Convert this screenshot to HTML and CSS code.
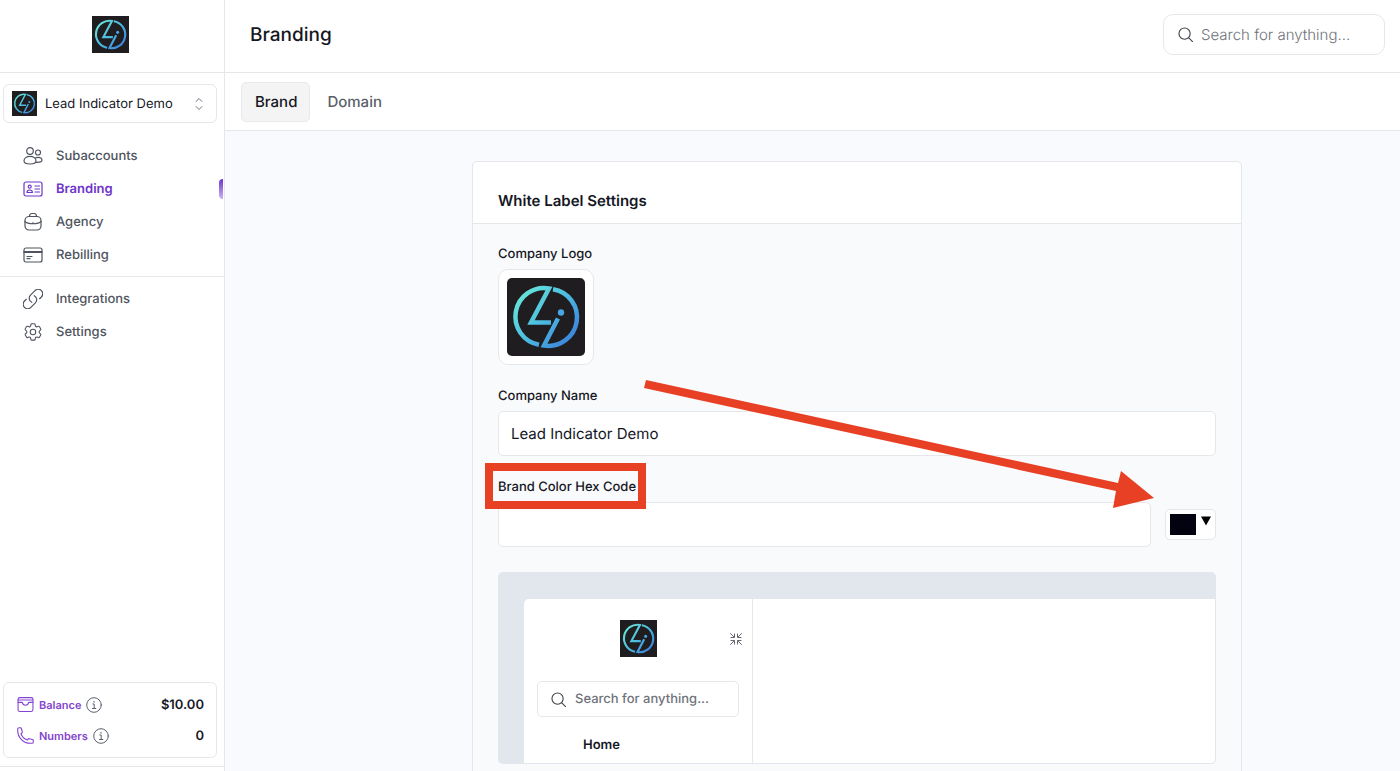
FILE: index.html
```html
<!DOCTYPE html>
<html lang="en">
<head>
<meta charset="utf-8">
<meta name="viewport" content="width=device-width, initial-scale=1">
<title>Branding</title>
<link rel="stylesheet" href="styles.css">
</head>
<body>

<!-- shared shapes -->
<svg class="defs" aria-hidden="true">
  <defs>
    <linearGradient id="logoGradient" gradientUnits="userSpaceOnUse" x1="12" y1="14" x2="66" y2="64">
      <stop offset="0" stop-color="#68e6d8"/>
      <stop offset="0.5" stop-color="#4cbce0"/>
      <stop offset="1" stop-color="#3c80dc"/>
    </linearGradient>
    <symbol id="logo" viewBox="0 0 78 78">
      <rect width="78" height="78" fill="#1f1d20"/>
      <g fill="none" stroke="url(#logoGradient)" stroke-width="4.500">
        <path d="M32 66.800A28.500 28.500 0 0 1 42 10.500L24 44.500H44"/>
        <path d="M46 11.200A28.500 28.500 0 0 1 37 67.500L51 40.500"/>
      </g>
      <circle cx="54" cy="34.500" r="3.200" fill="#48a5e4"/>
    </symbol>
    <symbol id="search" viewBox="0 0 16 16">
      <circle cx="7" cy="7" r="6"/>
      <path d="M11.500 11.500L15.500 15.500"/>
    </symbol>
    <symbol id="info" viewBox="0 0 16 16">
      <circle cx="8" cy="8" r="7.300"/>
      <path d="M6.800 7H8.200V11.500M6.500 11.500H9.800M8 4.300V5.300"/>
    </symbol>
  </defs>
</svg>

<div class="app">

  <aside class="sidebar">
    <div class="sidebar-logo">
      <svg class="logo-md" role="img" aria-label="Lead Indicator"><use href="#logo"/></svg>
    </div>

    <button type="button" class="account">
      <svg class="logo-sm" aria-hidden="true"><use href="#logo"/></svg>
      <span>Lead Indicator Demo</span>
      <svg class="updown" viewBox="0 0 8 14" aria-hidden="true"><path d="M1 4.500L4 1.500L7 4.500M1 9.500L4 12.500L7 9.500"/></svg>
    </button>

    <nav class="nav">
      <ul>
        <li><a href="#">
          <svg viewBox="0 0 20 20"><circle cx="7" cy="5" r="3.300"/><circle cx="15" cy="6.500" r="2.500"/><path d="M7 10.300C3.500 10.300 1 12.200 1 15C1 17.300 3.500 18 7 18S13 17.300 13 15C13 12.200 10.500 10.300 7 10.300ZM12.500 12C13.200 11.600 14.100 11.400 15 11.400C17.300 11.400 19 12.500 19 14.300C19 15.800 17.300 16.400 13 16.300"/></svg>
          Subaccounts</a></li>
        <li><a href="#" class="active">
          <svg viewBox="0 0 20 20"><rect x="1" y="3" width="18" height="14" rx="2"/><circle cx="6.700" cy="7.700" r="1.500"/><path d="M4 13.500C4 11.700 5 11 6.700 11S9.400 11.700 9.400 13.500ZM12 7H16.500M12 10H16.500M12 13H16.500"/></svg>
          Branding</a></li>
        <li><a href="#">
          <svg viewBox="0 0 20 20"><rect x="2" y="4.500" width="16" height="13.500" rx="4"/><path d="M6.500 4.500C6.500 2.500 7.300 1.500 8.800 1.500H11.200C12.700 1.500 13.500 2.500 13.500 4.500M2 9.500C4.500 12.500 15.500 12.500 18 9.500M10 10.500V11.300"/></svg>
          Agency</a></li>
        <li><a href="#">
          <svg viewBox="0 0 20 20"><rect x="1" y="3" width="18" height="14" rx="2"/><path d="M1 6.500H19M1 7.300H19M4 11.500H9M4 13.700H7"/></svg>
          Rebilling</a></li>
      </ul>
      <ul class="nav-more">
        <li><a href="#">
          <svg class="thick" viewBox="2 2 20 20"><path d="M13.200 8.700a4.500 4.500 0 0 1 1.200 7.200l-4.500 4.500a4.500 4.500 0 0 1-6.400-6.400l1.800-1.700m13.300-.6 1.800-1.700a4.500 4.500 0 0 0-6.400-6.400l-4.500 4.500a4.500 4.500 0 0 0 1.300 7.200"/></svg>
          Integrations</a></li>
        <li><a href="#">
          <svg class="thick" viewBox="1 1 22 22"><path d="M9.600 3.900c.1-.5.600-.9 1.100-.9h2.600c.5 0 1 .4 1.100.9l.2 1.300c.1.400.3.700.6.900l.3.100c.3.200.7.200 1.100.1l1.200-.5a1.100 1.100 0 0 1 1.400.5l1.300 2.300c.2.500.1 1-.3 1.400l-1 .8c-.3.300-.4.600-.4 1v.3c0 .4.100.8.400 1l1 .9c.4.300.5.900.3 1.400l-1.300 2.200a1.100 1.100 0 0 1-1.400.5l-1.200-.5c-.4-.1-.8-.1-1.100.1l-.3.100c-.3.200-.5.500-.6.900l-.2 1.300c-.1.500-.5.900-1.100.9h-2.600c-.5 0-1-.4-1.100-.9l-.2-1.300c-.1-.4-.3-.7-.6-.9l-.3-.1c-.3-.2-.7-.2-1.100-.1l-1.200.5a1.100 1.100 0 0 1-1.400-.5l-1.300-2.300c-.2-.5-.1-1 .3-1.400l1-.8c.3-.3.400-.6.400-1v-.3c0-.4-.1-.8-.4-1l-1-.9a1.100 1.100 0 0 1-.3-1.400l1.300-2.200c.3-.5.900-.7 1.400-.5l1.200.5c.4.100.8.100 1.100-.1l.3-.1c.3-.2.500-.5.600-.9z"/><circle cx="12" cy="12" r="3"/></svg>
          Settings</a></li>
      </ul>
    </nav>

    <div class="usage">
      <div class="usage-row">
        <svg class="usage-icon" viewBox="0 0 16 16" aria-hidden="true"><rect x="1" y="1.500" width="14" height="13" rx="1.500"/><path d="M1 3.800H15M1 6H5C5.300 7.800 6.500 8.700 8 8.700S10.700 7.800 11 6H15"/></svg>
        <span class="usage-name">Balance</span>
        <svg class="info" aria-hidden="true"><use href="#info"/></svg>
        <strong>$10.00</strong>
      </div>
      <div class="usage-row">
        <svg class="usage-icon" viewBox="0 0 24 24" aria-hidden="true"><path class="thick" d="M1 5C1 15 9 23 19 23H21C22.200 23 23 22.200 23 21V19.200C23 18.500 22.500 17.900 21.800 17.700L17 16.500C16.400 16.400 15.800 16.600 15.500 17.100L14.500 18.400C10.600 17 7 13.400 5.600 9.500L6.900 8.500C7.400 8.100 7.600 7.500 7.500 7L6.300 2.200C6.100 1.500 5.500 1 4.800 1H3C1.800 1 1 1.800 1 3Z"/></svg>
        <span class="usage-name">Numbers</span>
        <svg class="info" aria-hidden="true"><use href="#info"/></svg>
        <strong>0</strong>
      </div>
    </div>
  </aside>

  <main class="main">
    <header class="topbar">
      <h1>Branding</h1>
      <label class="search search-top">
        <svg aria-hidden="true"><use href="#search"/></svg>
        <input type="search" placeholder="Search for anything..." aria-label="Search for anything">
      </label>
    </header>

    <nav class="tabs">
      <a href="#" class="tab current">Brand</a>
      <a href="#" class="tab">Domain</a>
    </nav>

    <div class="content">
      <section class="card">
        <h2>White Label Settings</h2>

        <form class="card-body">
          <div class="field">
            <span class="label">Company Logo</span>
            <div class="logo-box">
              <svg class="logo-lg" role="img" aria-label="Company logo"><use href="#logo"/></svg>
            </div>
          </div>

          <div class="field">
            <label class="label" for="companyName">Company Name</label>
            <input class="text" type="text" id="companyName" value="Lead Indicator Demo">
          </div>

          <div class="field">
            <label class="label marked" for="hexCode">Brand Color Hex Code</label>
            <div class="color-row">
              <input class="text" type="text" id="hexCode">
              <button type="button" class="picker" aria-label="Pick a color">
                <span class="swatch"></span>
                <svg class="caret" viewBox="0 0 10 10"><path d="M0 0.500H10L5 9.500Z"/></svg>
              </button>
            </div>
          </div>

          <div class="preview">
            <div class="preview-window">
              <div class="preview-side">
                <div class="preview-logo">
                  <svg class="logo-md" aria-hidden="true"><use href="#logo"/></svg>
                  <svg class="collapse" viewBox="0 0 12 12" aria-hidden="true"><path d="M0.500 0.500L4 4M1 4.500H4.500V1M11.500 0.500L8 4M11 4.500H7.500V1M0.500 11.500L4 8M1 7.500H4.500V11M11.500 11.500L8 8M11 7.500H7.500V11"/></svg>
                </div>
                <label class="search search-preview">
                  <svg aria-hidden="true"><use href="#search"/></svg>
                  <input type="search" placeholder="Search for anything..." aria-label="Search preview">
                </label>
                <a href="#" class="preview-link">Home</a>
              </div>
            </div>
          </div>
        </form>

        <!-- arrow to the color picker -->
        <svg class="arrow" viewBox="0 0 510 126" aria-hidden="true">
          <path d="M2 -4L474 99L477 87L510 114L469 124L472 107L0 4Z"/>
        </svg>
      </section>
    </div>
  </main>

</div>

</body>
</html>
```
FILE: styles.css
```css
* {
  box-sizing: border-box;
}

body {
  margin: 0;
  font-family: Inter, "Liberation Sans", sans-serif;
  font-size: 13px;
  line-height: 20px;
  text-rendering: geometricPrecision;
  color: #15171f;
  background: #fff;
}

button, input {
  font: inherit;
  color: inherit;
  text-rendering: inherit;
}

a {
  color: inherit;
  text-decoration: none;
}

ul {
  margin: 0;
  padding: 0;
  list-style: none;
}

svg {
  flex: none;
  fill: none;
  stroke-linecap: round;
  stroke-linejoin: round;
}

.defs {
  position: absolute;
  width: 0;
  height: 0;
}

.app {
  display: flex;
  height: 100vh;
  overflow: hidden;
}

/* Logo sizes */
.logo-sm, .logo-md, .logo-lg {
  display: block;
  stroke-linecap: butt;
  stroke-linejoin: miter;
}

.logo-sm {
  width: 25px;
  height: 25px;
}

.logo-md {
  width: 37px;
  height: 37px;
}

.logo-lg {
  width: 78px;
  height: 78px;
  border-radius: 5px;
}

/* Sidebar */
.sidebar {
  display: flex;
  flex-direction: column;
  flex: none;
  width: 225px;
  border-right: 1px solid #e5e7eb;
}

.sidebar-logo {
  display: flex;
  align-items: center;
  justify-content: center;
  height: 73px;
  padding: 0 4px 4px 0;
  border-bottom: 1px solid #e5e7eb;
}

.account {
  display: flex;
  align-items: center;
  gap: 8px;
  height: 39px;
  margin: 11px 7px 16px 3px;
  padding: 0 13px 0 8px;
  border: 1px solid #e5e7eb;
  border-radius: 6px;
  background: #fff;
  text-align: left;
}

.account span {
  flex: 1;
}

.updown {
  width: 8px;
  height: 14px;
  stroke: #6b7280;
}

.nav a {
  display: flex;
  align-items: center;
  gap: 13px;
  height: 33px;
  padding-left: 23px;
  font-weight: 500;
  color: #4f545e;
}

.nav svg {
  width: 20px;
  height: 20px;
  stroke: currentColor;
  stroke-width: 1.2px;
}

.nav a.active {
  position: relative;
  font-weight: 600;
  color: #6d35c9;
}

.nav a.active::after {
  content: '';
  position: absolute;
  right: 1px;
  width: 4px;
  height: 20px;
  border-radius: 4px 0 0 4px;
  background: linear-gradient(#6d35c9, #c9b5f0);
}

.nav-more {
  margin-top: 5px;
  padding-top: 5px;
  border-top: 1px solid #e5e7eb;
}

.usage {
  margin: auto 7px 8px 3px;
  padding: 6px 12px 6px 13px;
  border: 1px solid #e5e7eb;
  border-radius: 6px;
}

.usage-row {
  display: flex;
  align-items: center;
  gap: 5px;
  height: 31px;
  color: #8345d0;
}

.usage-icon {
  width: 17px;
  height: 17px;
  stroke: currentColor;
}

.thick {
  stroke-width: 1.6px;
}

.usage-name {
  font-size: 11px;
  font-weight: 600;
}

.info {
  width: 16px;
  height: 16px;
  stroke: #5b616e;
}

.usage strong {
  margin-left: auto;
  font-weight: 600;
  color: #15171f;
}

.sidebar::after {
  content: '';
  height: 4px;
  border-top: 1px solid #e5e7eb;
}

/* Top bar and tabs */
.main {
  display: flex;
  flex-direction: column;
  flex: 1;
  min-width: 0;
}

.topbar {
  display: flex;
  align-items: center;
  justify-content: space-between;
  flex: none;
  height: 73px;
  padding: 0 15px 3px 25px;
  border-bottom: 1px solid #e5e7eb;
}

.topbar h1 {
  margin: 0;
  font-size: 19px;
  font-weight: 500;
}

.search {
  display: flex;
  align-items: center;
  border: 1px solid #e5e7eb;
  background: #fff;
}

.search svg {
  width: 15px;
  height: 15px;
  stroke: #3f434b;
  stroke-width: 1.2px;
}

.search input {
  flex: 1;
  min-width: 0;
  padding: 0;
  border: 0;
  outline: 0;
  background: none;
}

.search input::placeholder {
  color: #6f737b;
}

.search-top {
  gap: 8px;
  width: 222px;
  height: 41px;
  padding: 0 14px;
  border-radius: 10px;
  font-size: 15px;
  font-weight: 300;
}

.tabs {
  display: flex;
  align-items: center;
  gap: 3px;
  flex: none;
  height: 58px;
  padding: 0 16px;
  border-bottom: 1px solid #e5e7eb;
}

.tab {
  padding: 9px 12px 9px 13px;
  border: 1px solid transparent;
  border-radius: 5px;
  font-size: 15px;
  font-weight: 500;
  color: #5b5f68;
}

.tab.current {
  border-color: #e8e9eb;
  background: #f4f4f5;
  color: #15171f;
}

/* Settings card */
.content {
  flex: 1;
  min-height: 0;
  padding: 30px 158px 0 247px;
  overflow: hidden;
  background: #f8fafd;
}

.card {
  position: relative;
  border: 1px solid #e5e7eb;
  border-radius: 5px;
  background: #f9fafc;
}

.card h2 {
  margin: 0;
  padding: 28px 25px 12px;
  border-bottom: 1px solid #e5e7eb;
  border-radius: 5px 5px 0 0;
  background: #fff;
  font-size: 15px;
  line-height: 21px;
  font-weight: 600;
}

.card-body {
  display: flex;
  flex-direction: column;
  gap: 21px;
  padding: 20px 25px 30px;
}

.field {
  display: flex;
  flex-direction: column;
  align-items: flex-start;
  gap: 5px;
}

.label {
  font-weight: 500;
}

.logo-box {
  padding: 8px;
  border: 1px solid #e5e7eb;
  border-radius: 10px;
  background: #fff;
}

.text {
  width: 100%;
  height: 45px;
  padding: 0 12px;
  border: 1px solid #e5e7eb;
  border-radius: 5px;
  background: #fff;
  font-size: 15px;
}

/* Red frame around the label */
.marked {
  position: relative;
}

.marked::after {
  content: '';
  position: absolute;
  inset: -14px -10px -12px -13px;
  border: 8px solid #e84025;
}

.color-row {
  display: flex;
  align-items: center;
  gap: 14px;
  width: 100%;
}

.color-row .text {
  flex: 1;
  min-width: 0;
}

.picker {
  display: flex;
  gap: 5px;
  height: 31px;
  padding: 4px;
  border: 1px solid #e5e7eb;
  border-radius: 5px;
  background: #fff;
}

.swatch {
  width: 26px;
  height: 21px;
  background: #020211;
}

.caret {
  width: 10px;
  height: 10px;
  margin-top: 2px;
  fill: #000;
}

.arrow {
  position: absolute;
  top: 222px;
  left: 171px;
  width: 510px;
  height: 126px;
  overflow: visible;
  fill: #e84025;
}

/* Preview of the branded app */
.preview {
  margin-top: 4px;
  padding: 27px 0 0 26px;
  border: 1px solid #e2e7ee;
  border-width: 0 1px 1px 0;
  border-radius: 5px;
  background: #e2e7ee;
}

.preview-window {
  display: flex;
  border-radius: 5px 0 4px 0;
  background: #fff;
}

.preview-side {
  width: 229px;
  padding: 21px 13px 8px;
  border-right: 1px solid #e5e7eb;
}

.preview-logo {
  position: relative;
  display: flex;
  align-items: center;
  justify-content: center;
  margin-bottom: 24px;
}

.collapse {
  position: absolute;
  right: -3px;
  width: 12px;
  height: 12px;
  stroke: #62666e;
}

.search-preview {
  gap: 9px;
  height: 36px;
  padding: 0 13px;
  border-radius: 5px;
  font-weight: 500;
}

.preview-link {
  display: block;
  margin-top: 18px;
  padding-left: 46px;
  font-weight: 600;
}
```
